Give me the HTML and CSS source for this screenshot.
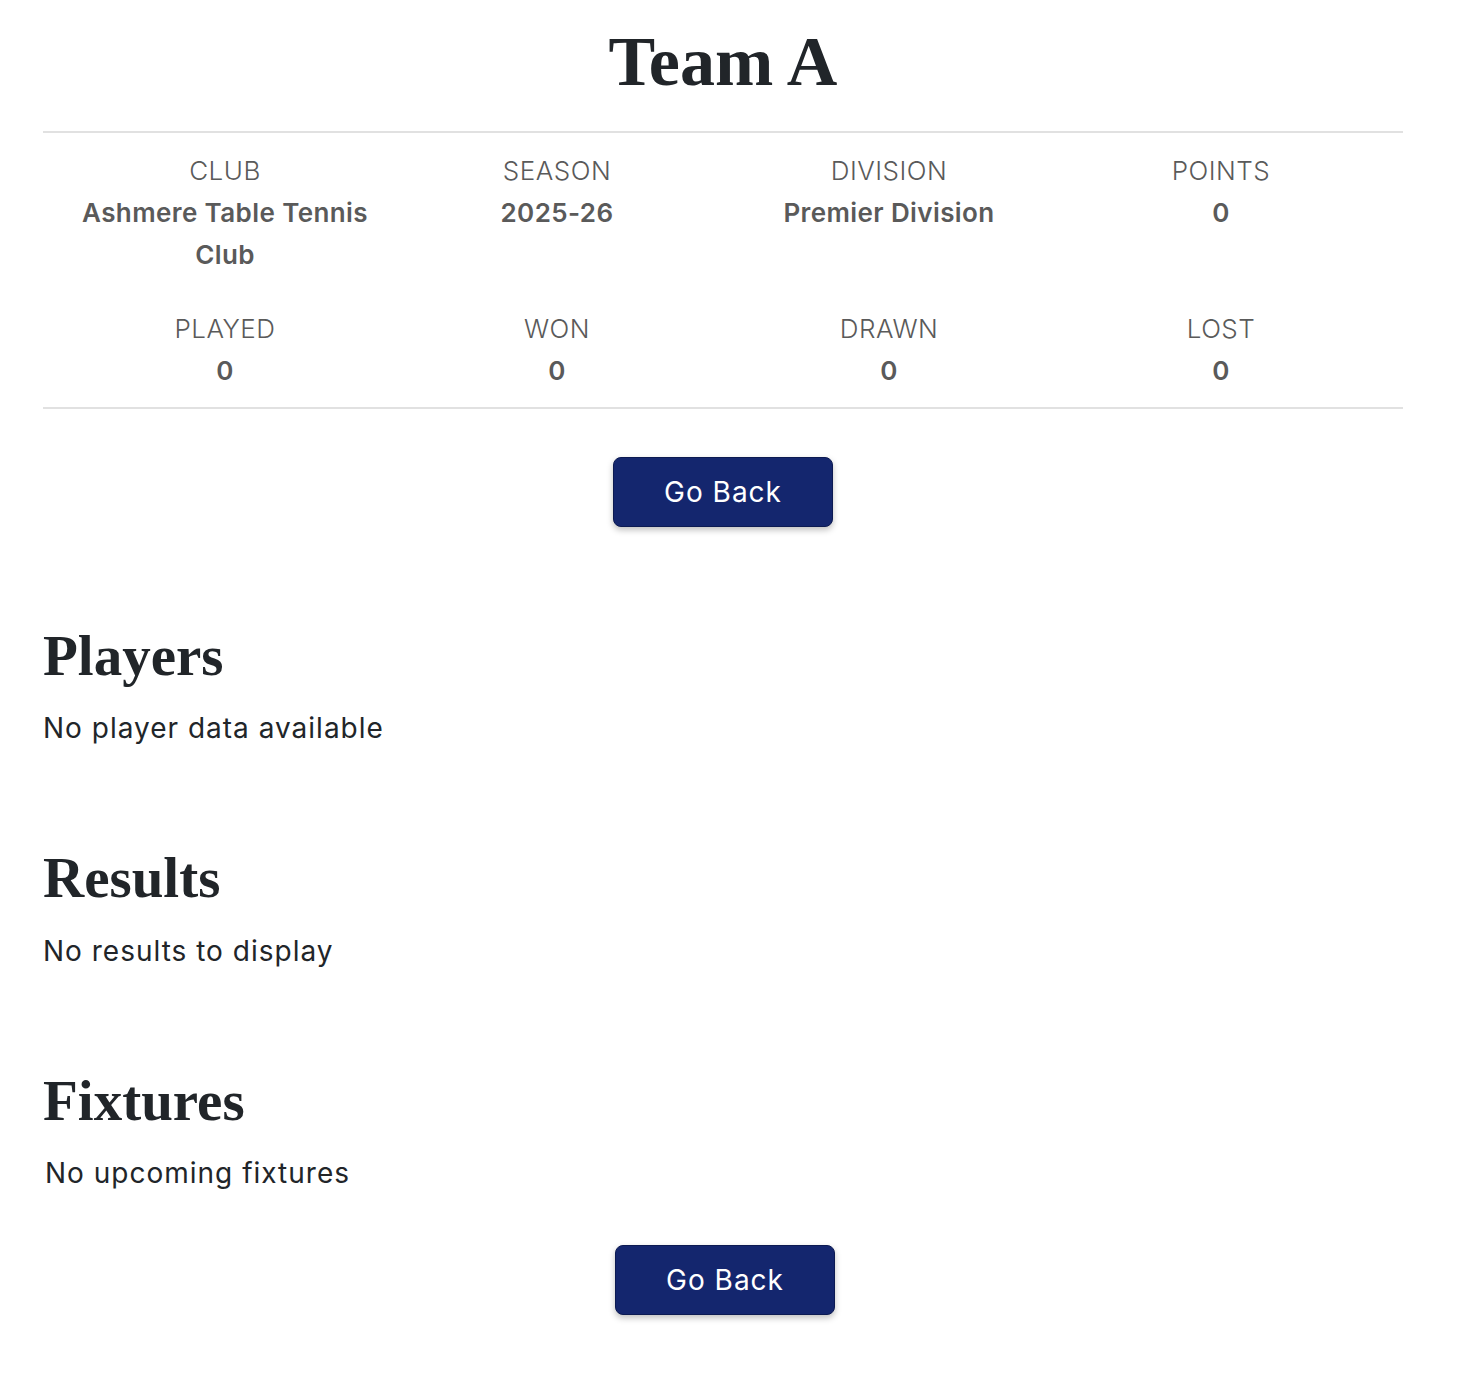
FILE: index.html
```html
<!DOCTYPE html>
<html lang="en">
<head>
<meta charset="utf-8">
<title>Team A</title>
<link rel="stylesheet" href="styles.css">
</head>
<body>
<main class="page">
  <h1 class="title">Team A</h1>
  <section class="stats">
    <div class="stat"><div class="label">CLUB</div><div class="value">Ashmere Table Tennis Club</div></div>
    <div class="stat"><div class="label">SEASON</div><div class="value">2025-26</div></div>
    <div class="stat"><div class="label">DIVISION</div><div class="value">Premier Division</div></div>
    <div class="stat"><div class="label">POINTS</div><div class="value">0</div></div>
    <div class="stat"><div class="label">PLAYED</div><div class="value">0</div></div>
    <div class="stat"><div class="label">WON</div><div class="value">0</div></div>
    <div class="stat"><div class="label">DRAWN</div><div class="value">0</div></div>
    <div class="stat"><div class="label">LOST</div><div class="value">0</div></div>
  </section>
  <div class="actions"><button class="btn">Go Back</button></div>

  <section class="block">
    <h2 class="heading">Players</h2>
    <p class="empty">No player data available</p>
  </section>
  <section class="block">
    <h2 class="heading">Results</h2>
    <p class="empty">No results to display</p>
  </section>
  <section class="block">
    <h2 class="heading">Fixtures</h2>
    <p class="empty indent">No upcoming fixtures</p>
  </section>
  <div class="actions shift"><button class="btn">Go Back</button></div>
</main>
</body>
</html>
```
FILE: styles.css
```css
html, body {
  margin: 0;
  padding: 0;
  background: #ffffff;
}
body {
  font-family: "Inter", "Noto Sans", sans-serif;
  color: #212529;
}
.page {
  width: 1360px;
  margin-left: 43px;
  padding-bottom: 60px;
}
.title {
  font-family: "Liberation Serif", "DejaVu Serif", serif;
  font-weight: 700;
  font-size: 70px;
  line-height: 1;
  text-align: center;
  margin: 0;
  padding-top: 27px;
  padding-bottom: 34px;
  color: #212529;
}
.stats {
  border-top: 2px solid #e1e1e1;
  border-bottom: 2px solid #e1e1e1;
  padding: 17px 16px 15px;
  display: grid;
  grid-template-columns: repeat(4, 1fr);
  row-gap: 32px;
}
.stat {
  text-align: center;
  padding: 0 16px;
  color: #5a5a5a;
  font-size: 26px;
  line-height: 42px;
}
.label {
  font-weight: 300;
  letter-spacing: 0.5px;
}
.value {
  font-weight: 600;
  letter-spacing: 0.4px;
}
.actions {
  display: flex;
  justify-content: center;
  padding-top: 48px;
}
.actions.shift {
  padding-top: 51px;
  padding-left: 4px;
}
.btn {
  width: 220px;
  height: 70px;
  background: #14266e;
  color: #ffffff;
  border: 1px solid #0c1a52;
  border-radius: 8px;
  font-family: "Inter", "Noto Sans", sans-serif;
  font-size: 28px;
  letter-spacing: 1px;
  box-shadow: 0 3px 6px rgba(0, 0, 0, 0.25);
}
.block {
  padding-top: 95px;
}
.block:first-of-type {
  padding-top: 97px;
}
.heading {
  font-family: "Liberation Serif", "DejaVu Serif", serif;
  font-weight: 700;
  font-size: 57px;
  line-height: 1.2;
  margin: 0;
  color: #212529;
}
.empty {
  margin: 17px 0 0;
  font-size: 28px;
  letter-spacing: 1px;
  line-height: 1.5;
}
.empty.indent {
  padding-left: 2px;
}
```
